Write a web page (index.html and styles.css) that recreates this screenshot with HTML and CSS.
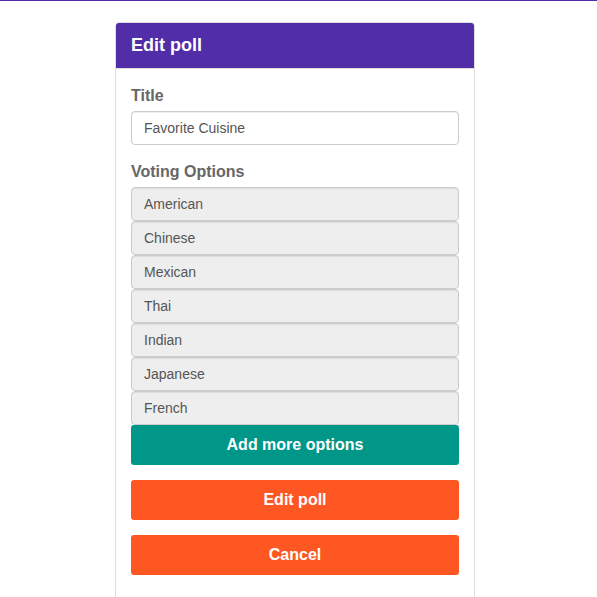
FILE: index.html
```html
<!DOCTYPE html>
<html>
<head>
<meta charset="utf-8">
<link rel="stylesheet" href="styles.css">
</head>
<body>
<div class="topbar"></div>
<div class="page">
  <div class="card">
    <div class="card-header">Edit poll</div>
    <div class="card-body">
      <div class="group">
        <label class="label">Title</label>
        <div class="input">Favorite Cuisine</div>
      </div>
      <div class="group options-group">
        <label class="label">Voting Options</label>
        <div class="option">American</div>
        <div class="option">Chinese</div>
        <div class="option">Mexican</div>
        <div class="option">Thai</div>
        <div class="option">Indian</div>
        <div class="option">Japanese</div>
        <div class="option">French</div>
        <button class="btn btn-teal">Add more options</button>
      </div>
      <button class="btn btn-orange">Edit poll</button>
      <button class="btn btn-orange">Cancel</button>
    </div>
  </div>
</div>
</body>
</html>
```
FILE: styles.css
```css
* { box-sizing: border-box; }
html, body { margin: 0; padding: 0; background: #fff; }
body {
  font-family: "Liberation Sans", Arial, sans-serif;
  height: 597px;
  overflow: hidden;
}
.topbar { height: 1px; background: #512da8; }
.page {
  display: flex;
  justify-content: center;
  padding: 21px 7px 0 0;
}
.card {
  width: 360px;
  border: 1px solid #ddd;
  border-radius: 4px;
  background: #fff;
  min-height: 600px;
}
.card-header {
  background: #512da8;
  color: #fff;
  font-size: 18px;
  font-weight: bold;
  height: 46px;
  line-height: 44px;
  padding: 0 15px;
  border-bottom: 1px solid #ddd;
  border-radius: 3px 3px 0 0;
}
.card-body { padding: 15px; display: flex; flex-direction: column; }
.group { margin-bottom: 15px; display: flex; flex-direction: column; }
.label {
  font-weight: bold;
  font-size: 16px;
  line-height: 22px;
  color: #666;
  padding-top: 1px;
  margin-bottom: 4px;
}
.input, .option {
  height: 34px;
  border: 1px solid #ccc;
  border-radius: 4px;
  padding: 0 12px;
  font-size: 14px;
  line-height: 32px;
  color: #555;
  background: #fff;
  box-shadow: inset 0 1px 1px rgba(0,0,0,0.075);
}
.option { background: #eee; }
.btn {
  display: block;
  width: 100%;
  height: 40px;
  border: 0;
  border-radius: 3px;
  color: #fff;
  font-family: "Liberation Sans", Arial, sans-serif;
  font-weight: bold;
  font-size: 16px;
  padding: 0;
}
.btn-teal { background: #009688; }
.btn-orange { background: #ff5722; margin-bottom: 15px; }
```
